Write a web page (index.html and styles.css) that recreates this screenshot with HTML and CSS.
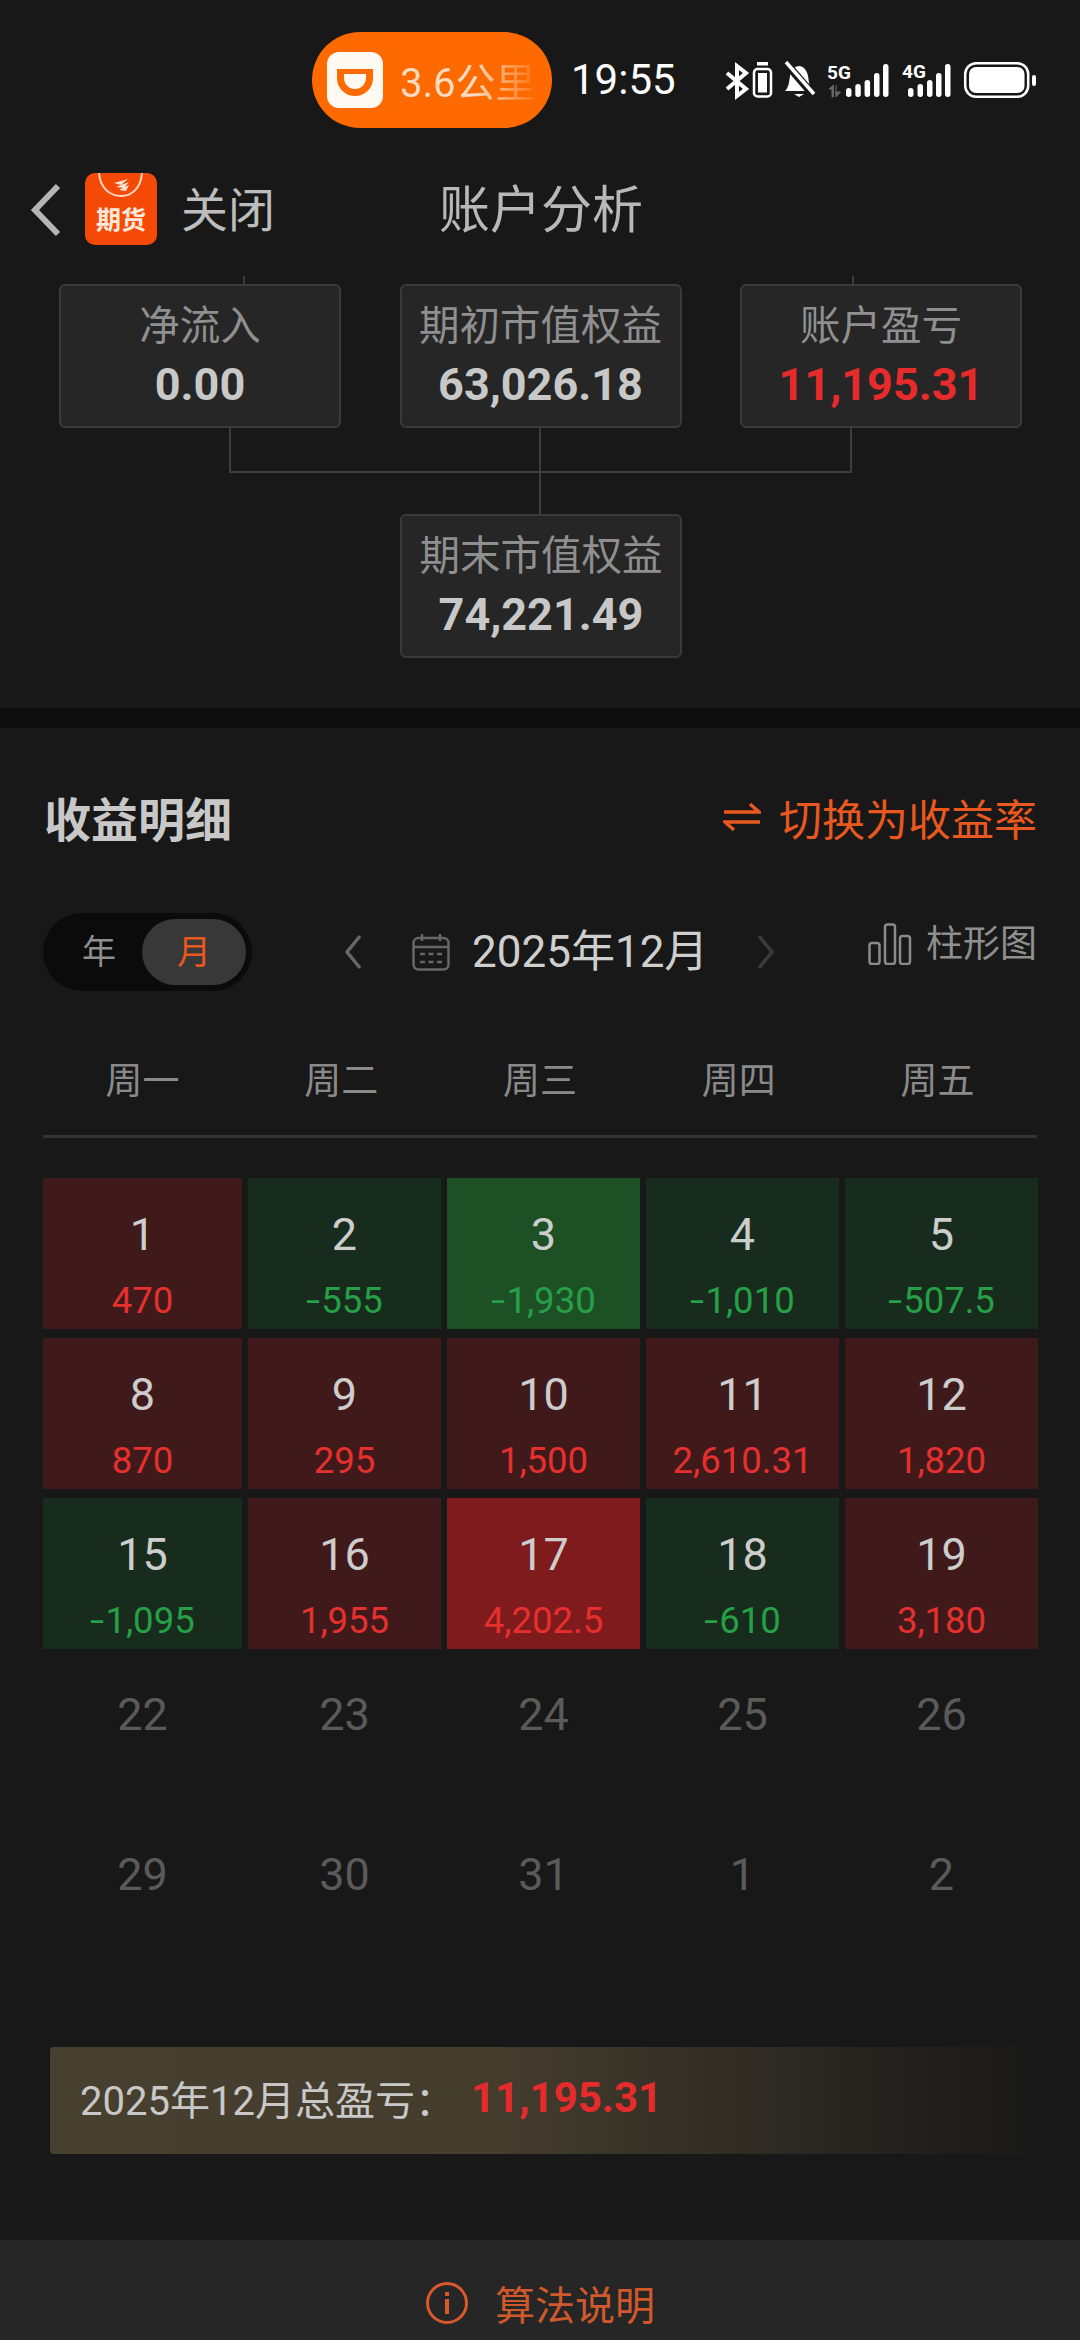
FILE: index.html
```html
<!DOCTYPE html>
<html lang="zh-CN">
<head>
  <meta charset="UTF-8">
  <meta name="viewport" content="width=device-width, initial-scale=1.0">
  <title>账户分析</title>
  <link rel="stylesheet" href="styles.css">
</head>
<body>
  <!-- 状态栏 -->
  <div class="status">
    <div class="pill">
      <svg class="pill-icon" viewBox="0 0 56 56">
        <rect width="56" height="56" rx="12" fill="#fff9f2"/>
        <path d="M10 17H46V26A18 18 0 0 1 10 26ZM17 22V26A11 11 0 0 0 39 26V22Z" fill="#ff6a00" fill-rule="evenodd"/>
      </svg>
      <span class="pill-text">3.6公里</span>
    </div>
    <span class="clock">19:55</span>
    <svg class="status-icons" viewBox="0 0 320 40">
      <!-- 蓝牙 -->
      <path d="M3 12L22 28L13 35V5L22 12L3 28" fill="none" stroke="#fff" stroke-width="4"/>
      <!-- 振动 -->
      <rect x="30" y="8" width="17" height="27.5" rx="3.5" fill="none" stroke="#fff" stroke-width="2.5"/>
      <rect x="34" y="12" width="9" height="19.5" fill="#fff"/>
      <rect x="33" y="1" width="11" height="3.5" fill="#fff"/>
      <!-- 静音 -->
      <path d="M61 30C65 26 65 21 66 15C67 9 71 5 75 5C79 5 83 9 84 15C85 21 85 26 89 30Z" fill="#fff"/>
      <path d="M70 33H80L75 36Z" fill="#fff"/>
      <path d="M60 0L92 37" stroke="#181818" stroke-width="8"/>
      <path d="M62 1L90 33" stroke="#fff" stroke-width="3.5"/>
      <!-- 5G -->
      <text class="net" x="103" y="18">5G</text>
      <path d="M108 36V28H105L109.500 24V36ZM112 36V24M112 36L116.500 31H111" fill="#666" stroke="#666" stroke-width="1"/>
      <rect x="122" y="27" width="5.500" height="9" rx="2.700" fill="#fff"/>
      <rect x="131.300" y="23" width="5.500" height="13" rx="2.700" fill="#fff"/>
      <rect x="140.600" y="19" width="5.500" height="17" rx="2.700" fill="#fff"/>
      <rect x="150" y="12" width="5.500" height="24" rx="2.700" fill="#fff"/>
      <rect x="159" y="3" width="5.500" height="33" rx="2.700" fill="#fff"/>
      <!-- 4G -->
      <text class="net" x="178" y="17">4G</text>
      <rect x="184" y="27" width="5.500" height="9" rx="2.700" fill="#fff"/>
      <rect x="193.500" y="23" width="5.500" height="13" rx="2.700" fill="#fff"/>
      <rect x="203" y="19" width="5.500" height="17" rx="2.700" fill="#fff"/>
      <rect x="212" y="12" width="5.500" height="24" rx="2.700" fill="#fff"/>
      <rect x="221" y="3" width="5.500" height="33" rx="2.700" fill="#fff"/>
      <!-- 电池 -->
      <rect x="241.200" y="2.200" width="63" height="33.600" rx="11" fill="none" stroke="#fff" stroke-width="2.500"/>
      <rect x="245" y="6" width="55.500" height="26" rx="7" fill="#fff"/>
      <rect x="308" y="14" width="4" height="11" rx="2" fill="#fff"/>
    </svg>
  </div>

  <!-- 顶部导航 -->
  <div class="nav">
    <svg class="back" viewBox="0 0 32 54">
      <path d="M28 3L5 27L28 51" fill="none" stroke="#b5b5b5" stroke-width="6"/>
    </svg>
    <div class="app-icon">
      <svg class="app-arc" viewBox="0 0 72 34">
        <path d="M14 0C15 15 25 23 36 23C47 23 56 15 57 0" fill="none" stroke="#ffd9c4" stroke-width="2"/>
        <path d="M43 6L29 10L36 12ZM44 9L31 14L39 15ZM44 12L34 17L41 18Z" fill="#ffe6d8"/>
      </svg>
      <span class="app-label">期货</span>
    </div>
    <span class="nav-close">关闭</span>
    <span class="nav-title">账户分析</span>
  </div>

  <!-- 权益关系图 -->
  <div class="tree">
    <div class="tree-stubs">
      <span class="stub"></span>
      <span class="stub"></span>
    </div>
    <div class="tree-row">
      <div class="box">
        <span class="box-label">净流入</span>
        <span class="box-value">0.00</span>
      </div>
      <div class="box">
        <span class="box-label">期初市值权益</span>
        <span class="box-value">63,026.18</span>
      </div>
      <div class="box">
        <span class="box-label">账户盈亏</span>
        <span class="box-value red">11,195.31</span>
      </div>
    </div>
    <svg class="tree-lines" viewBox="0 0 1080 86">
      <path d="M230 0V44H851V0M540 0V86" fill="none" stroke="#3d3d3d" stroke-width="2"/>
    </svg>
    <div class="tree-row tree-row-end">
      <div class="box">
        <span class="box-label">期末市值权益</span>
        <span class="box-value">74,221.49</span>
      </div>
    </div>
  </div>

  <div class="band"></div>

  <!-- 收益明细 -->
  <div class="section-head">
    <h2 class="section-title">收益明细</h2>
    <div class="switch">
      <svg class="switch-icon" viewBox="0 0 38 32">
        <path d="M1 11H36L27 3M37 21H2L11 29" fill="none" stroke="#e8581f" stroke-width="3.5"/>
      </svg>
      <span>切换为收益率</span>
    </div>
  </div>

  <div class="toolbar">
    <div class="toggle">
      <span class="toggle-item">年</span>
      <span class="toggle-item active">月</span>
    </div>
    <svg class="month-arrow prev" viewBox="0 0 20 36">
      <path d="M17 2L4 18L17 34" fill="none" stroke="#666" stroke-width="3.5"/>
    </svg>
    <svg class="calendar-icon" viewBox="0 0 38 38">
      <rect x="1.5" y="5" width="35" height="31.5" rx="5" fill="none" stroke="#666" stroke-width="2.5"/>
      <path d="M2 14H36M10 1V8M28 1V8" fill="none" stroke="#666" stroke-width="2.5"/>
      <path d="M8 21H30M8 29H30" fill="none" stroke="#666" stroke-width="2.5" stroke-dasharray="5 3.5"/>
    </svg>
    <span class="month-text">2025年12月</span>
    <svg class="month-arrow next" viewBox="0 0 20 36">
      <path d="M3 2L16 18L3 34" fill="none" stroke="#3a3a3a" stroke-width="3.5"/>
    </svg>
    <div class="chart-link">
      <svg class="chart-icon" viewBox="0 0 44 42">
        <rect x="1.5" y="20" width="10" height="21" rx="2.5" fill="none" stroke="#8a8a8a" stroke-width="2.5"/>
        <rect x="17" y="1.5" width="10" height="39.5" rx="2.5" fill="none" stroke="#8a8a8a" stroke-width="2.5"/>
        <rect x="32" y="13" width="10" height="28" rx="2.5" fill="none" stroke="#8a8a8a" stroke-width="2.5"/>
      </svg>
      <span>柱形图</span>
    </div>
  </div>

  <div class="weekdays">
    <span>周一</span>
    <span>周二</span>
    <span>周三</span>
    <span>周四</span>
    <span>周五</span>
  </div>

  <div class="calendar">
    <div class="cell loss"><span class="day">1</span><span class="amount">470</span></div>
    <div class="cell gain"><span class="day">2</span><span class="amount"><span class="minus">-</span>555</span></div>
    <div class="cell gain strong"><span class="day">3</span><span class="amount"><span class="minus">-</span>1,930</span></div>
    <div class="cell gain"><span class="day">4</span><span class="amount"><span class="minus">-</span>1,010</span></div>
    <div class="cell gain"><span class="day">5</span><span class="amount"><span class="minus">-</span>507.5</span></div>

    <div class="cell loss"><span class="day">8</span><span class="amount">870</span></div>
    <div class="cell loss"><span class="day">9</span><span class="amount">295</span></div>
    <div class="cell loss"><span class="day">10</span><span class="amount">1,500</span></div>
    <div class="cell loss"><span class="day">11</span><span class="amount">2,610.31</span></div>
    <div class="cell loss"><span class="day">12</span><span class="amount">1,820</span></div>

    <div class="cell gain"><span class="day">15</span><span class="amount"><span class="minus">-</span>1,095</span></div>
    <div class="cell loss"><span class="day">16</span><span class="amount">1,955</span></div>
    <div class="cell loss strong"><span class="day">17</span><span class="amount">4,202.5</span></div>
    <div class="cell gain"><span class="day">18</span><span class="amount"><span class="minus">-</span>610</span></div>
    <div class="cell loss"><span class="day">19</span><span class="amount">3,180</span></div>

    <div class="cell off"><span class="day">22</span></div>
    <div class="cell off"><span class="day">23</span></div>
    <div class="cell off"><span class="day">24</span></div>
    <div class="cell off"><span class="day">25</span></div>
    <div class="cell off"><span class="day">26</span></div>

    <div class="cell off"><span class="day">29</span></div>
    <div class="cell off"><span class="day">30</span></div>
    <div class="cell off"><span class="day">31</span></div>
    <div class="cell off"><span class="day">1</span></div>
    <div class="cell off"><span class="day">2</span></div>
  </div>

  <div class="summary">
    <span class="summary-label">2025年12月总盈亏：</span>
    <span class="summary-value">11,195.31</span>
  </div>

  <!-- 底部说明 -->
  <div class="footer">
    <svg class="info-icon" viewBox="0 0 44 44">
      <circle cx="22" cy="22" r="19.5" fill="none" stroke="#d9592a" stroke-width="3"/>
      <rect x="20" y="11" width="4" height="4" fill="#d9592a"/>
      <rect x="20" y="18" width="4" height="15" fill="#d9592a"/>
    </svg>
    <span>算法说明</span>
  </div>
</body>
</html>
```

FILE: styles.css
```css
* {
  box-sizing: border-box;
}

body {
  margin: 0;
  width: 1080px;
  height: 2340px;
  overflow: hidden;
  background-color: #181818;
  font-family: Roboto, "Noto Sans CJK SC", sans-serif;
  color: #c8c8c8;
}

/* 状态栏 */
.status {
  height: 160px;
  padding-top: 32px;
  padding-left: 312px;
  display: flex;
  align-items: flex-start;
}

.pill {
  width: 240px;
  height: 96px;
  border-radius: 48px;
  background-color: #ff6a00;
  display: flex;
  align-items: center;
  padding-left: 15px;
  gap: 17px;
}

.pill-icon {
  width: 56px;
  height: 56px;
}

.pill-text {
  width: 135px;
  font-size: 40px;
  white-space: nowrap;
  overflow: hidden;
  color: #ffdcc0;
  -webkit-mask-image: linear-gradient(90deg, #000 55%, rgba(0, 0, 0, 0.1) 100%);
  mask-image: linear-gradient(90deg, #000 55%, rgba(0, 0, 0, 0.1) 100%);
}

.clock {
  width: 103px;
  margin-left: 19px;
  height: 96px;
  line-height: 96px;
  font-size: 42px;
  color: #fff;
  white-space: nowrap;
}

.status-icons {
  width: 320px;
  height: 40px;
  margin-left: 50px;
  margin-top: 29px;
}

.net {
  font-family: "Roboto", sans-serif;
  font-size: 19px;
  font-weight: 700;
  fill: #fff;
}

/* 导航 */
.nav {
  height: 100px;
  padding-left: 30px;
  display: flex;
  align-items: center;
}

.back {
  width: 32px;
  height: 54px;
}

.app-icon {
  width: 72px;
  height: 72px;
  margin-left: 23px;
  margin-bottom: 3px;
  border-radius: 10px;
  background-color: #f54a07;
  display: flex;
  flex-direction: column;
  align-items: center;
  overflow: hidden;
}

.app-arc {
  width: 72px;
  height: 34px;
  flex: none;
}

.app-label {
  font-size: 25px;
  line-height: 27px;
  font-weight: 700;
  color: #ffe9dc;
  white-space: nowrap;
}

.nav-close {
  margin-left: 24px;
  padding-bottom: 8px;
  font-size: 47px;
  color: #bdbdbd;
}

.nav-title {
  margin-left: 164px;
  padding-bottom: 8px;
  font-size: 51px;
  color: #b8b8b8;
}

/* 关系图 */
.tree {
  height: 448px;
  padding-top: 16px;
}

.tree-stubs {
  height: 8px;
  display: flex;
  padding-left: 243px;
}

.stub {
  flex: none;
  width: 2px;
  height: 8px;
  margin-right: 607px;
  background-color: #3d3d3d;
}

.tree-row {
  display: flex;
  padding-left: 59px;
  gap: 58.5px;
}

.tree-row-end {
  padding-left: 400px;
}

.tree-lines {
  display: block;
  width: 1080px;
  height: 86px;
}

.box {
  width: 282px;
  height: 144px;
  border: 2px solid #3a3a3a;
  border-radius: 6px;
  background-color: #262626;
  display: flex;
  flex-direction: column;
  align-items: center;
  padding-top: 12px;
}

.box-label {
  font-size: 40.5px;
  line-height: 56px;
  color: #8f8f8f;
}

.box-value {
  margin-top: 3px;
  font-size: 45px;
  line-height: 56px;
  font-weight: 700;
  color: #c8c8c8;
}

.box-value.red {
  color: #e52b2b;
}

.band {
  height: 20px;
  background-color: #0d0d0d;
}

/* 收益明细 */
.section-head {
  height: 185px;
  padding: 0 43px 8px 44px;
  display: flex;
  align-items: center;
  justify-content: space-between;
}

.section-title {
  margin: 0;
  font-size: 47px;
  font-weight: 700;
  color: #c8c8c8;
}

.switch {
  display: flex;
  align-items: center;
  gap: 18px;
  font-size: 43px;
  color: #e8581f;
}

.switch-icon {
  width: 38px;
  height: 32px;
}

.toolbar {
  height: 78px;
  padding-left: 43px;
  display: flex;
  align-items: center;
}

.toggle {
  width: 209px;
  height: 78px;
  border-radius: 39px;
  padding: 6px;
  background-color: #0b0b0b;
  display: flex;
  justify-content: flex-end;
}

.toggle-item {
  flex: none;
  width: 86px;
  height: 66px;
  line-height: 66px;
  text-align: center;
  font-size: 34px;
  color: #8f8f8f;
}

.toggle-item.active {
  width: 104px;
  border-radius: 33px;
  background-color: #383838;
  color: #e8581f;
}

.month-arrow {
  width: 20px;
  height: 36px;
}

.month-arrow.prev {
  margin-left: 91px;
}

.month-arrow.next {
  margin-left: 52px;
}

.calendar-icon {
  width: 38px;
  height: 38px;
  margin-left: 49px;
}

.month-text {
  margin-left: 22px;
  width: 232px;
  padding-bottom: 8px;
  font-size: 44px;
  color: #cfcfcf;
  white-space: nowrap;
}

.chart-link {
  margin-left: 92px;
  margin-top: -14px;
  display: flex;
  align-items: flex-end;
  gap: 14px;
  font-size: 37px;
  line-height: 48px;
  color: #8f8f8f;
}

.chart-icon {
  width: 44px;
  height: 42px;
  margin-bottom: 4px;
}

.weekdays {
  height: 147px;
  margin: 0 43px;
  padding-top: 30px;
  border-bottom: 3px solid #333;
  display: grid;
  grid-template-columns: repeat(5, 1fr);
  align-items: center;
  text-align: center;
  font-size: 37px;
  color: #8a8a8a;
}

/* 日历 */
.calendar {
  margin: 40px 0 0 43px;
  display: grid;
  grid-template-columns: 199px repeat(4, 193px);
  grid-auto-rows: 151px;
  gap: 9px 6px;
}

.cell {
  padding-top: 27px;
  display: flex;
  flex-direction: column;
  align-items: center;
}

.day {
  font-size: 45px;
  line-height: 60px;
  color: #cdcdcd;
}

.amount {
  margin-top: 14px;
  font-size: 36.5px;
  line-height: 44px;
  white-space: nowrap;
}

.minus {
  display: inline-block;
  margin: 0 3px 0 2px;
  transform: scaleX(1.4);
}

.cell.loss {
  background-color: #401a1b;
}

.cell.loss .amount {
  color: #e5302e;
}

.cell.loss.strong {
  background-color: #7f1b1d;
}

.cell.gain {
  background-color: #182c1d;
}

.cell.gain .amount {
  color: #26a046;
}

.cell.gain.strong {
  background-color: #1e5026;
}

.cell.off .day {
  color: #5a5a5a;
}

.summary {
  width: 990px;
  height: 107px;
  margin: 78px 0 0 50px;
  padding: 0 0 6px 30px;
  border-radius: 4px;
  background: linear-gradient(90deg, #47402f 0%, #443d2e 45%, rgba(24, 24, 24, 0) 100%);
  display: flex;
  align-items: center;
}

.summary-label {
  width: 391px;
  font-size: 40px;
  color: #c8c8c8;
  white-space: nowrap;
}

.summary-value {
  font-size: 42px;
  font-weight: 700;
  color: #e52b2b;
}

.footer {
  height: 100px;
  margin-top: 86px;
  padding-top: 26px;
  background-color: #262626;
  display: flex;
  align-items: center;
  justify-content: center;
  gap: 26px;
  font-size: 40px;
  color: #d0592c;
}

.info-icon {
  width: 44px;
  height: 44px;
}
```
